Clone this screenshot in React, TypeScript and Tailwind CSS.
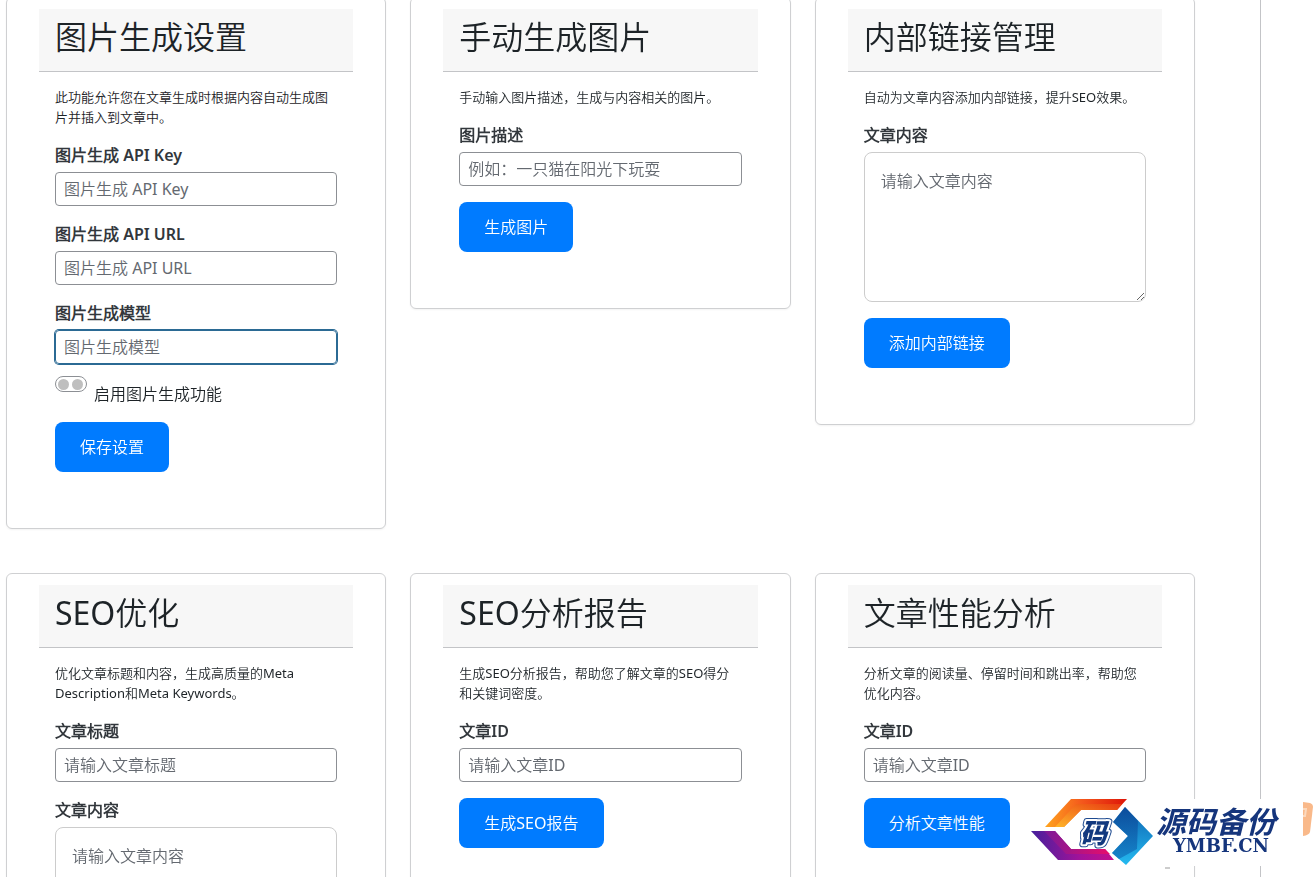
// App.tsx
// Article tools settings page: a grid of cards, each with a small form.

import React from "react"

interface Field {
    id: string;
    label: string;
    placeholder: string;
    multiline?: boolean;
    focused?: boolean;
}

interface ToolCardProps {
    title: string;
    description: string;
    fields: Field[];
    toggle?: string;
    action: string;
}

const cards: ToolCardProps[] = [
    {
        title: "图片生成设置",
        description: "此功能允许您在文章生成时根据内容自动生成图片并插入到文章中。",
        fields: [
            { id: "image-key", label: "图片生成 API Key", placeholder: "图片生成 API Key" },
            { id: "image-url", label: "图片生成 API URL", placeholder: "图片生成 API URL" },
            { id: "image-model", label: "图片生成模型", placeholder: "图片生成模型", focused: true },
        ],
        toggle: "启用图片生成功能",
        action: "保存设置",
    },
    {
        title: "手动生成图片",
        description: "手动输入图片描述，生成与内容相关的图片。",
        fields: [{ id: "image-desc", label: "图片描述", placeholder: "例如：一只猫在阳光下玩耍" }],
        action: "生成图片",
    },
    {
        title: "内部链接管理",
        description: "自动为文章内容添加内部链接，提升SEO效果。",
        fields: [{ id: "link-content", label: "文章内容", placeholder: "请输入文章内容", multiline: true }],
        action: "添加内部链接",
    },
    {
        title: "SEO优化",
        description: "优化文章标题和内容，生成高质量的Meta Description和Meta Keywords。",
        fields: [
            { id: "seo-title", label: "文章标题", placeholder: "请输入文章标题" },
            { id: "seo-content", label: "文章内容", placeholder: "请输入文章内容", multiline: true },
        ],
        action: "优化SEO",
    },
    {
        title: "SEO分析报告",
        description: "生成SEO分析报告，帮助您了解文章的SEO得分和关键词密度。",
        fields: [{ id: "report-id", label: "文章ID", placeholder: "请输入文章ID" }],
        action: "生成SEO报告",
    },
    {
        title: "文章性能分析",
        description: "分析文章的阅读量、停留时间和跳出率，帮助您优化内容。",
        fields: [{ id: "perf-id", label: "文章ID", placeholder: "请输入文章ID" }],
        action: "分析文章性能",
    },
]

const FormField: React.FC<Field> = ({ id, label, placeholder, multiline, focused }) => (
    <div className="flex flex-col">
        <label htmlFor={id} className="mb-[5px] leading-6 font-semibold text-[#32373c]">
            {label}
        </label>
        {multiline ? (
            <textarea
                id={id}
                placeholder={placeholder}
                className="h-[150px] w-full resize rounded-lg border border-[#ccc] p-4 leading-6 outline-none placeholder:text-[#646970]"
            />
        ) : (
            <input
                id={id}
                type="text"
                placeholder={placeholder}
                autoFocus={focused}
                className="h-[34px] w-full rounded border border-[#8c8f94] px-2 outline-none placeholder:text-[#646970] focus:border-[#2b6a94] focus:ring-1 focus:ring-[#2b6a94]"
            />
        )}
    </div>
)

const ToolCard: React.FC<ToolCardProps> = ({ title, description, fields, toggle, action }) => (
    <section className="rounded-md border border-[#cfd0d2] bg-white px-8 pt-[11px] pb-10 shadow-xs">
        <header className="border-b border-[#c3c4c7] bg-[#f7f7f7] px-4 py-2">
            <h2 className="mb-1.5 text-[32px] leading-10 font-normal text-[#1d2327]">{title}</h2>
        </header>
        <form className="flex flex-col gap-4 px-4 pt-[15px] pb-4" onSubmit={(e) => e.preventDefault()}>
            <p className="text-[13px] leading-5">{description}</p>
            {fields.map((field) => (
                <FormField key={field.id} {...field} />
            ))}
            {toggle && (
                <div className="-mt-1 flex items-start gap-[7px]">
                    <input
                        id="image-enabled"
                        type="checkbox"
                        className="flex h-4 w-8 appearance-none items-center gap-[3px] rounded-full border border-[#8c8f94] bg-white px-0.5 before:size-[11px] before:rounded-full before:bg-[#bfbfbf] after:size-[11px] after:rounded-full after:bg-[#bfbfbf]"
                    />
                    <label htmlFor="image-enabled" className="mt-1.5 leading-6">
                        {toggle}
                    </label>
                </div>
            )}
            <button type="submit" className="h-[50px] self-start rounded-lg bg-[#007bff] px-[25px] text-white">
                {action}
            </button>
        </form>
    </section>
)

const Watermark: React.FC = () => (
    <div className="fixed right-0 bottom-[11px] flex h-[67px] w-[283px] items-center bg-white">
        <svg className="overflow-visible" width="283" height="67" viewBox="1030 799 283 67" aria-label="源码备份 YMBF.CN">
            <defs>
                <linearGradient id="warm" x1="0" y1="0" x2="1" y2="0">
                    <stop offset="0" stopColor="#ffa51f" />
                    <stop offset="0.45" stopColor="#f4581c" />
                    <stop offset="1" stopColor="#dd1408" />
                </linearGradient>
                <linearGradient id="amber" x1="0" y1="1" x2="1" y2="0">
                    <stop offset="0" stopColor="#ffb62a" />
                    <stop offset="1" stopColor="#e83a10" />
                </linearGradient>
                <linearGradient id="violet" x1="0" y1="0" x2="1" y2="0">
                    <stop offset="0" stopColor="#46209c" />
                    <stop offset="0.6" stopColor="#a3129a" />
                    <stop offset="1" stopColor="#c4108c" />
                </linearGradient>
                <linearGradient id="magenta" x1="0" y1="0" x2="1" y2="0">
                    <stop offset="0" stopColor="#7a1a98" />
                    <stop offset="1" stopColor="#e80d6c" />
                </linearGradient>
                <linearGradient id="navy" x1="0" y1="0" x2="0" y2="1">
                    <stop offset="0" stopColor="#0b3d8e" />
                    <stop offset="1" stopColor="#0c66b4" />
                </linearGradient>
                <linearGradient id="sky" x1="0" y1="0" x2="0" y2="1">
                    <stop offset="0" stopColor="#0d62b0" />
                    <stop offset="1" stopColor="#25baf0" />
                </linearGradient>
            </defs>
            <path d="M1071 799h56l-10 11h-36l-17 17h-19z" fill="url(#warm)" />
            <path d="M1076 804h46l-5 6h-36l-17 17h-9z" fill="url(#amber)" />
            <path d="M1031 831h24l16 18h34l9 11h-56z" fill="url(#violet)" />
            <path d="M1044 831h11l16 18h34l5 5h-44z" fill="url(#magenta)" />
            <path d="M1125 807l28 29-27 29-14-12 16-17-15-14z" fill="url(#sky)" />
            <path d="M1125 807l13 14 -1 28-18 10-7-6 16-17-15-14z" fill="url(#navy)" opacity="0.6" />
            {/* outlined badge character: dark rim, white halo, solid face */}
            <g fontSize="27" fontStyle="italic" fontWeight="900" strokeLinejoin="round" fontFamily="'Noto Sans CJK SC', sans-serif">
                <text x="1080" y="843" fill="#1d4a90" stroke="#1d4a90" strokeWidth="6">码</text>
                <text x="1080" y="843" fill="#fff" stroke="#fff" strokeWidth="4">码</text>
                <text x="1080" y="843" fill="#12397f">码</text>
            </g>
            <text x="1156" y="833" fontSize="30" fontStyle="italic" fontWeight="700" fill="#15357c" fontFamily="'Noto Sans CJK SC', sans-serif">源码备份</text>
            <text x="1173" y="852" fontSize="18" fontWeight="700" fill="#15357c" fontFamily="'DejaVu Serif', serif">YMBF.CN</text>
            <path d="M1303 802l7 1q3 1 3 4l-3 25q-1 3-7 4z" fill="#f9b98a" />
            <path d="M1303 809h3l-1 7h-2" fill="none" stroke="#fcd9bd" strokeWidth="2" />
            <path d="M1165 868h5" stroke="#9a9a9a" strokeWidth="1" />
        </svg>
    </div>
)

const App: React.FC = () => {
    return (
        <div className="h-screen overflow-hidden bg-white font-['Noto_Sans','Noto_Sans_CJK_SC_DemiLight','Noto_Sans_CJK_SC',sans-serif] text-base text-[#1d2327]">
            <main className="mr-[52px] border-r border-[#c3c4c7] pr-[65px] pl-1.5">
                <div className="-mt-[3px] grid grid-cols-1 items-start gap-x-6 gap-y-11 md:grid-cols-3">
                    {cards.map((card) => (
                        <ToolCard key={card.title} {...card} />
                    ))}
                </div>
            </main>
            <Watermark />
        </div>
    )
}

export default App
